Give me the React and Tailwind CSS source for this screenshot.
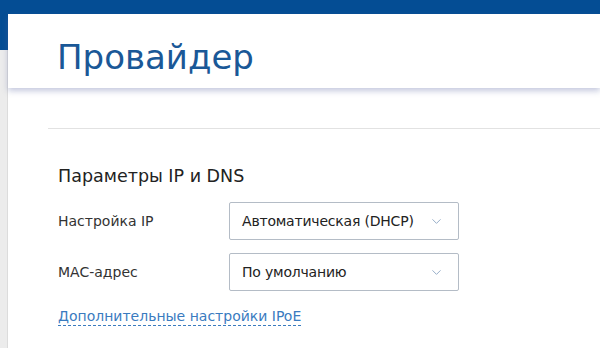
import { ChevronDown } from "lucide-react";

const font = { fontFamily: '"DejaVu Sans", Verdana, sans-serif' };

function Select({ value }) {
  return (
    <div className="w-[230px] h-[38px] border border-[#b4bcc6] rounded-[2px] bg-white flex items-center justify-between pl-[12px] pr-[14px]">
      <span className="text-[14px] tracking-[-0.2px] text-[#222]">{value}</span>
      <ChevronDown size={15} strokeWidth={1.5} className="text-[#8fa7c4]" />
    </div>
  );
}

export default function App() {
  const rows = [
    { label: "Настройка IP", value: "Автоматическая (DHCP)" },
    { label: "MAC-адрес", value: "По умолчанию" },
  ];

  return (
    <div className="relative w-[600px] h-[348px] overflow-hidden bg-white" style={font}>
      <div className="h-[14px] bg-[#044d94]" />
      <div className="flex h-[334px]">
        <div className="w-[8px] flex flex-col">
          <div className="h-[36px] bg-[#044d94]" />
          <div className="flex-1 bg-[#ececec] border-r border-[#dcdcdc]" />
        </div>
        <div className="flex-1 flex flex-col">
          <div className="h-[74px] bg-white shadow-[0_3px_6px_rgba(90,100,160,0.35)] pl-[49px] pt-[23px] relative z-10">
            <h1 className="text-[34px] leading-[40px] text-[#1a5897]">Провайдер</h1>
          </div>
          <div className="ml-[40px] mt-[40px] border-t border-[#e2e2e2]" />
          <div className="pl-[50px] pt-[36px]">
            <h2 className="text-[17.5px] leading-[22px] text-[#222]">Параметры IP и DNS</h2>
            <div className="mt-[15px] flex flex-col gap-[13px]">
              {rows.map((r) => (
                <div key={r.label} className="flex items-center">
                  <span className="w-[171px] text-[14px] text-[#333]">{r.label}</span>
                  <Select value={r.value} />
                </div>
              ))}
            </div>
            <a className="inline-block mt-[17px] text-[14px] text-[#3a7bbf] border-b border-dashed border-[#3a7bbf] leading-[17px]">
              Дополнительные настройки IPoE
            </a>
          </div>
        </div>
      </div>
    </div>
  );
}
